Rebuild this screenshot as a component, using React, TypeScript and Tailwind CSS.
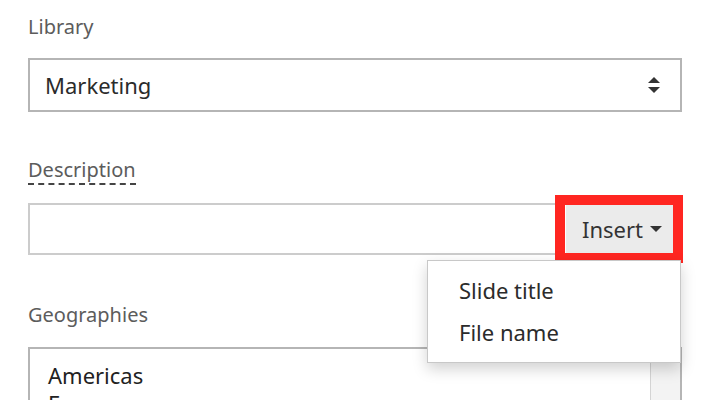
import { ChevronDown } from "lucide-react";

const font = { fontFamily: '"Noto Sans", "Open Sans", sans-serif' };

function SortArrows() {
  return (
    <svg width="12" height="17" viewBox="0 0 12 17" className="text-[#333]">
      <path d="M6 0 L12 6 L0 6 Z" fill="currentColor" />
      <path d="M0 10 L12 10 L6 16 Z" fill="currentColor" />
    </svg>
  );
}

function Caret() {
  return (
    <svg width="12" height="6" viewBox="0 0 12 6" className="text-[#333]">
      <path d="M0 0 L12 0 L6 6 Z" fill="currentColor" />
    </svg>
  );
}

export default function App() {
  const geographies = ["Americas", "Europe", "Asia Pacific"];

  return (
    <div className="relative w-[720px] h-[400px] overflow-hidden bg-white" style={font}>
      <div className="flex flex-col w-[654px] ml-[28px] pt-[13px]">
        {/* Library */}
        <label className="text-[20px] leading-[28px] text-[#5c5c5c]">Library</label>
        <div className="mt-[17px] h-[54px] border-2 border-[#b5b5b5] flex items-center justify-between pl-[15px] pr-[20px]">
          <span className="text-[22px] text-[#2b2b2b]">Marketing</span>
          <SortArrows />
        </div>

        {/* Description */}
        <div className="mt-[46px] h-[28px] flex">
          <span className="text-[20px] leading-[24px] text-[#5c5c5c] border-b-2 border-dashed border-[#444] h-[27px]">
            Description
          </span>
        </div>
        <div className="mt-[17px] h-[52px] border-2 border-[#cccccc] flex">
          <div className="flex-1" />
          <button className="w-[114px] h-full bg-[#ebebeb] flex items-center gap-[7px] pl-[16px] text-[22px] text-[#333]">
            Insert
            <Caret />
          </button>
        </div>

        {/* Geographies */}
        <label className="mt-[46px] text-[20px] leading-[28px] text-[#5c5c5c]">Geographies</label>
        <div className="mt-[18px] h-[80px] border-2 border-[#b5b5b5] flex">
          <ul className="flex-1 pt-[12px] pl-[18px]">
            {geographies.map((g) => (
              <li key={g} className="text-[22px] leading-[28px] text-[#222]">
                {g}
              </li>
            ))}
          </ul>
          <div className="w-[30px] border-l border-[#d4d4d4] bg-[#f3f3f3]" />
        </div>
      </div>

      {/* Highlight around the Insert button */}
      <div className="absolute left-[555px] top-[195px] w-[128px] h-[68px] border-[10px] border-[#ff2621]" />

      {/* Insert menu */}
      <ul className="absolute left-[427px] top-[260px] w-[254px] h-[103px] bg-white border border-[#c8c8c8] pt-[8px] shadow-[0_6px_14px_rgba(0,0,0,0.18)]">
        <li className="h-[42px] flex items-center pl-[31px] text-[22px] text-[#2b2b2b]">Slide title</li>
        <li className="h-[42px] flex items-center pl-[31px] text-[22px] text-[#2b2b2b]">File name</li>
      </ul>
    </div>
  );
}
